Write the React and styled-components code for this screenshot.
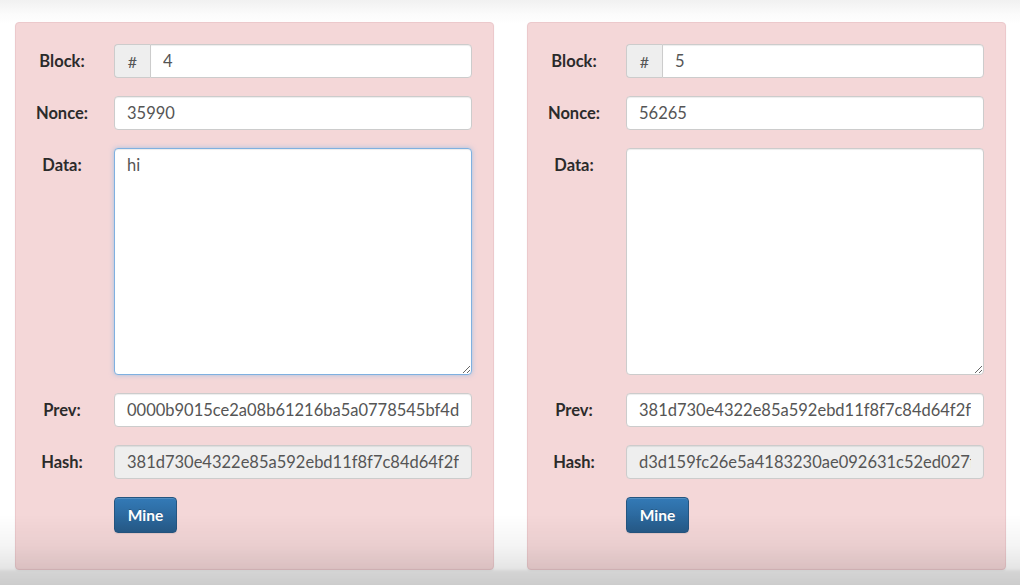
import React from 'react'
import styled, { createGlobalStyle } from 'styled-components'

const GlobalStyle = createGlobalStyle`
  html, body {
    margin: 0;
    height: 100%;
    overflow: hidden;
  }
  body {
    font-family: Lato, "Open Sans", "Liberation Sans", sans-serif;
    background: linear-gradient(to bottom, #f1f1f1 0, #fbfbfb 14px, #fff 24px);
    color: #333;
  }
`

const Page = styled.div`
  display: flex;
  gap: 33px;
  padding: 22px 14px 0 15px;
`

const Card = styled.div`
  flex: 0 0 479px;
  box-sizing: border-box;
  display: grid;
  grid-template-columns: 92px 1fr;
  column-gap: 6px;
  row-gap: 18px;
  padding: 21px 21px 36px 0;
  background: #f4d7d8;
  border: 1px solid #ecc9cc;
  border-radius: 4px;
  box-shadow: 0 1px 2px rgba(0, 0, 0, 0.05);
`

const Label = styled.label`
  text-align: center;
  font-weight: 700;
  font-size: 16.5px;
  color: #2b2b2b;
  line-height: 34px;
  height: 34px;
`

const Field = styled.input`
  box-sizing: border-box;
  width: 100%;
  height: 34px;
  padding: 6px 12px;
  font-family: inherit;
  font-size: 16.5px;
  color: #555;
  background: ${p => (p.readOnly ? '#eee' : '#fff')};
  border: 1px solid #ccc;
  border-radius: ${p => (p.$attached ? '0 4px 4px 0' : '4px')};
  box-shadow: inset 0 1px 1px rgba(0, 0, 0, 0.075);
  outline: none;
  min-width: 0;
`

const Group = styled.div`
  display: flex;
`

const Addon = styled.span`
  flex: 0 0 36px;
  box-sizing: border-box;
  height: 34px;
  display: flex;
  align-items: center;
  justify-content: center;
  font-size: 16px;
  color: #555;
  background: #eee;
  border: 1px solid #ccc;
  border-right: 0;
  border-radius: 4px 0 0 4px;
`

const Area = styled.textarea`
  box-sizing: border-box;
  width: 100%;
  height: 227px;
  padding: 6px 12px;
  font-family: inherit;
  font-size: 16.5px;
  color: #555;
  background: #fff;
  border: 1px solid ${p => (p.$focused ? '#7fb0e0' : '#ccc')};
  border-radius: 4px;
  box-shadow: ${p =>
    p.$focused
      ? 'inset 0 1px 1px rgba(0,0,0,.075), 0 0 5px rgba(102,175,233,.55)'
      : 'inset 0 1px 1px rgba(0,0,0,.075)'};
  outline: none;
  resize: vertical;
`

const Spacer = styled.div``

const MineButton = styled.button`
  justify-self: start;
  width: 63px;
  height: 36px;
  font-family: inherit;
  font-size: 15.5px;
  font-weight: 700;
  color: #fff;
  background: linear-gradient(to bottom, #337ab7 0, #265a88 100%);
  border: 1px solid #245580;
  border-radius: 4px;
  text-shadow: 0 -1px 0 rgba(0, 0, 0, 0.2);
  box-shadow: inset 0 1px 0 rgba(255, 255, 255, 0.15), 0 1px 1px rgba(0, 0, 0, 0.075);
`

const Shade = styled.div`
  position: fixed;
  inset: 0;
  pointer-events: none;
  background: linear-gradient(
    to bottom,
    rgba(0, 0, 0, 0) 0,
    rgba(0, 0, 0, 0) 515px,
    rgba(0, 0, 0, 0.04) 545px,
    rgba(0, 0, 0, 0.1) 568px,
    rgba(0, 0, 0, 0.17) 572px,
    rgba(0, 0, 0, 0.2) 585px
  );
`

const blocks = [
  {
    num: '4',
    nonce: '35990',
    data: 'hi',
    prev: '0000b9015ce2a08b61216ba5a0778545bf4d0f4a1e5c1d3b9f0a8f9b3d8d1f00',
    hash: '381d730e4322e85a592ebd11f8f7c84d64f2f3a2b6c7d8e9f0a1b2c3d4e5f6a7',
    focused: true,
  },
  {
    num: '5',
    nonce: '56265',
    data: '',
    prev: '381d730e4322e85a592ebd11f8f7c84d64f2f3a2b6c7d8e9f0a1b2c3d4e5f6a7',
    hash: 'd3d159fc26e5a4183230ae092631c52ed027f4b1a9c8e7d6f5a4b3c2d1e0f9a8',
    focused: false,
  },
]

function Block({ num, nonce, data, prev, hash, focused }) {
  return (
    <Card>
      <Label>Block:</Label>
      <Group>
        <Addon>#</Addon>
        <Field $attached defaultValue={num} />
      </Group>
      <Label>Nonce:</Label>
      <Field defaultValue={nonce} />
      <Label>Data:</Label>
      <Area $focused={focused} defaultValue={data} />
      <Label>Prev:</Label>
      <Field defaultValue={prev} />
      <Label>Hash:</Label>
      <Field readOnly defaultValue={hash} />
      <Spacer />
      <MineButton>Mine</MineButton>
    </Card>
  )
}

export default function App() {
  return (
    <>
      <GlobalStyle />
      <Page>
        {blocks.map(b => (
          <Block key={b.num} {...b} />
        ))}
      </Page>
      <Shade />
    </>
  )
}
